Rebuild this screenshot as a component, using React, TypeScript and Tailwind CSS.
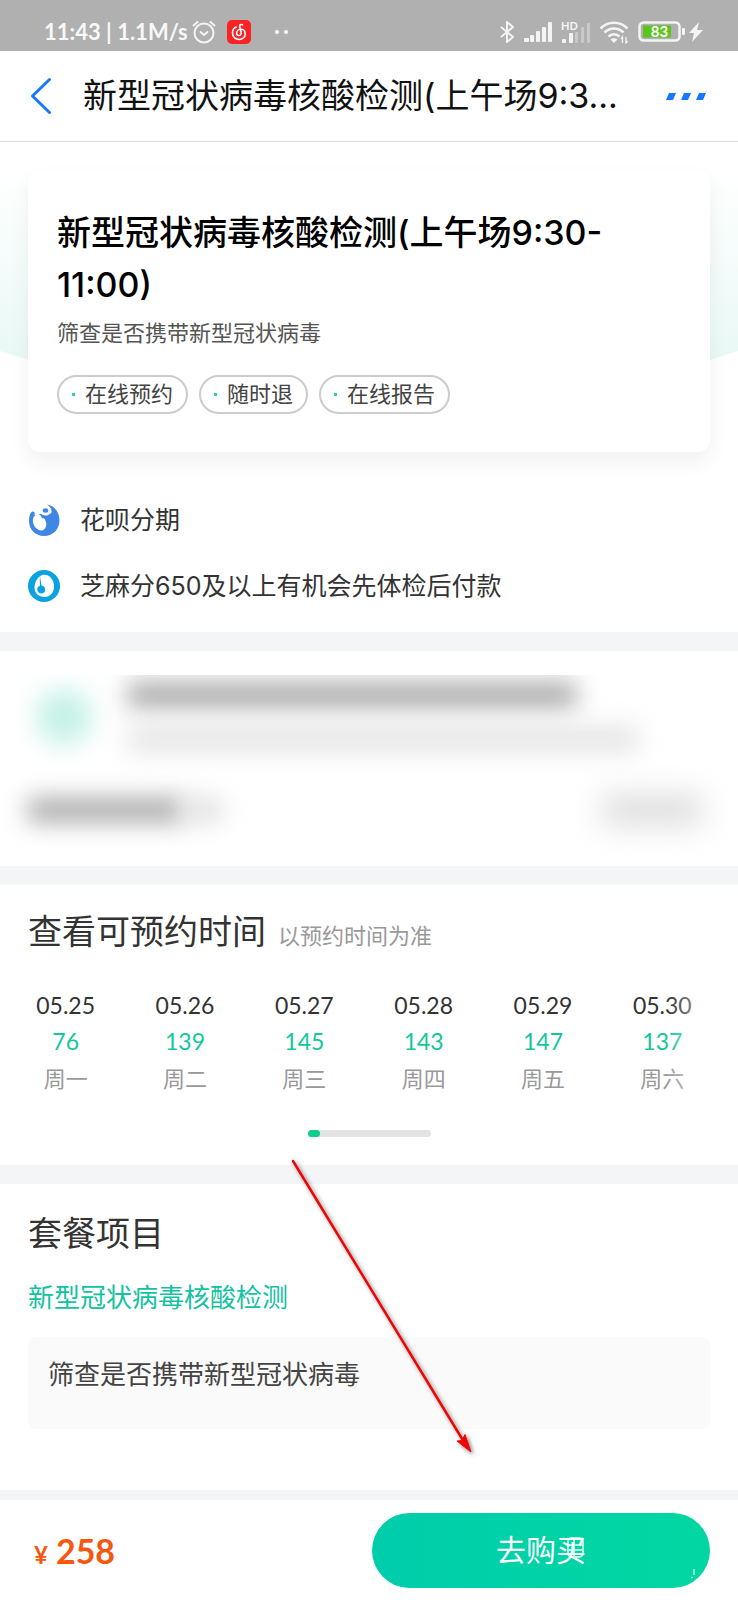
import { ReactNode } from 'react';

const tags = ['在线预约', '随时退', '在线报告'];

const days = [
  { date: '05.25', left: 76, week: '周一' },
  { date: '05.26', left: 139, week: '周二' },
  { date: '05.27', left: 145, week: '周三' },
  { date: '05.28', left: 143, week: '周四' },
  { date: '05.29', left: 147, week: '周五' },
  { date: '05.30', left: 137, week: '周六' },
];

function AlarmIcon() {
  return (
    <svg width="24" height="24" viewBox="0 0 24 24" fill="none" stroke="#f4f4f4" strokeWidth="2" strokeLinecap="round">
      <circle cx="12" cy="13" r="9.5" />
      <path d="M1.5 5.5 5.5 2M22.5 5.5 18.500 2" />
      <path d="m8.500 12 3.500 3 3.500-3" />
    </svg>
  );
}

function MusicIcon() {
  return (
    <svg width="24" height="24" viewBox="0 0 24 24" fill="none">
      <rect width="24" height="24" rx="5" fill="#fb2226" />
      <path
        d="M15.500 4.800c-1.700-.8-3.200 0-2.800 1.700l1.400 5.600c.5 2.200-.6 3.400-2.200 3.400-1.500 0-2.500-1.200-2.300-2.700.3-2.400 2.500-3.700 4.600-3.500 2.600.2 4 2.200 4 4.600 0 3.200-2.600 5.600-6 5.600-3.900 0-6.700-2.800-6.700-6.500 0-2.700 1.500-5 3.800-6"
        stroke="#fff"
        strokeWidth="1.600"
        strokeLinecap="round"
      />
    </svg>
  );
}

function BluetoothIcon() {
  return (
    <svg width="16" height="24" viewBox="0 0 16 24" fill="none" stroke="#f4f4f4" strokeWidth="2" strokeLinejoin="round">
      <path d="m2 7 12 10-6 5V2l6 5L2 17" />
    </svg>
  );
}

function SignalIcon() {
  return (
    <svg width="28" height="20" viewBox="0 0 28 20" fill="#f4f4f4">
      <rect y="16" width="5" height="4" rx="1" />
      <rect x="6" y="13" width="4" height="7" rx="1" />
      <rect x="12" y="9" width="4" height="11" rx="1" />
      <rect x="18" y="5" width="4" height="15" rx="1" />
      <rect x="24" y="0" width="4" height="20" rx="1" />
    </svg>
  );
}

function HdSignalIcon() {
  return (
    <svg className="overflow-visible" width="29" height="24" viewBox="0 0 29 24" fill="#f4f4f4">
      <text x="0" y="10" fontSize="11" fontWeight="700">HD</text>
      <rect x="1" y="19" width="4" height="4" rx="1" />
      <rect x="8" y="13" width="4" height="10" rx="1" />
      <g fill="#c9c9c9">
        <rect x="14" y="12" width="3" height="11" rx="1" />
        <rect x="20" y="7" width="3" height="16" rx="1" />
        <rect x="26" y="3" width="3" height="20" rx="1" />
      </g>
    </svg>
  );
}

function WifiIcon() {
  return (
    <svg width="30" height="24" viewBox="0 0 30 24" fill="none" stroke="#f4f4f4" strokeWidth="2.600">
      <path d="M1.500 8.500C9 .8 21 .8 28.500 8.500" />
      <path d="M5.500 12.500c5.500-5.300 13.500-5.300 19 0" />
      <path d="M9.500 16.500c3.200-3 7.800-3 11 0" />
      <path d="m11.500 19.500 3.500 3.500 3.500-3.500c-2-1.800-5-1.800-7 0Z" fill="#f4f4f4" stroke="none" />
      <path d="M23.500 23v-6l-1.500 2M27 17v6l1.500-2" strokeWidth="1.300" />
    </svg>
  );
}

function BatteryIcon() {
  return (
    <svg width="66" height="22" viewBox="0 0 66 22" fill="none">
      <rect x="1.500" y="1.500" width="40" height="18" rx="4" stroke="#f4f4f4" strokeWidth="2.500" />
      <rect x="5" y="4.500" width="28" height="12" fill="#5cc41a" />
      <rect x="44" y="7" width="3" height="7" rx="1" fill="#f4f4f4" />
      <text x="21.500" y="16" fontSize="15" fontWeight="700" textAnchor="middle" fill="#fff">83</text>
      <path d="M61 1 51 12h5l-2 9 11-12h-6l2-8Z" fill="#f4f4f4" />
    </svg>
  );
}

function HuabeiIcon() {
  return (
    <svg width="32" height="32" viewBox="0 0 32 32" fill="none">
      <path
        d="M19 .5c7.500 1 12.500 8 12.500 16C31.500 25 25 32 16.200 32S1 25.500 1 17c0-3.500.5-7 2.500-9 1.700-1 3.500 0 3.200 1.800-.2 1.500.8 2.200 2.300 2.200l4-3c2 3.500 7 3.500 9.500 1C25 7 23 3.500 19 .5Z"
        fill="#3f87e4"
      />
      <ellipse cx="11.500" cy="18.500" rx="6.200" ry="8.400" fill="#fff" transform="rotate(-28 11.500 18.500)" />
      <path d="M6.500 10.500C8 6.500 12 3 18.500 1.500c4 2 5.500 5.500 3 8-2.500 2.300-6.500 2-8.500 0-1.500.5-3 1.500-4 3Z" fill="#fff" />
      <ellipse cx="17.500" cy="6.500" rx="2.800" ry="2.200" fill="#3f87e4" />
      <path d="M11.500 9.500c2 2.800 8 3.500 11-.5v4l-8 1.500Z" fill="#3f87e4" />
    </svg>
  );
}

function ZhimaIcon() {
  return (
    <svg width="32" height="32" viewBox="0 0 32 32" fill="none">
      <circle cx="16" cy="16" r="16" fill="#0ba2e2" />
      <path d="M14.500 5C20 3.500 26 8.500 26 16.500 26 22.500 22 27 16.500 27S6.500 23 6.500 18 9 6.500 14.500 5Z" fill="#fff" />
      <path d="M12 6c.5 4 1.200 7 1.600 9.500 2.200.3 3.600 2 3.600 4 0 2.400-1.700 4-4 4s-4-1.700-4-4c0-1.700 1-3.200 2.800-3.700C12 12.500 11.500 9 12 6Z" fill="#0ba2e2" />
    </svg>
  );
}

function Feature({ icon, children }: { icon: ReactNode; children: ReactNode }) {
  return (
    <li className="flex items-center gap-5">
      {icon}
      <span className="text-[25px] leading-8">{children}</span>
    </li>
  );
}

function StatusBar() {
  return (
    <div className="flex h-[51px] items-end justify-between bg-[#b0b0b0] pr-[34px] pb-[7px] pl-11 font-[Lato,sans-serif] text-[#f8f8f8]">
      <div className="flex items-center">
        <span className="text-[22px] leading-6 font-bold">11:43 | 1.1M/s</span>
        <span className="ml-1 flex items-center gap-[11px]">
          <AlarmIcon />
          <MusicIcon />
        </span>
        <span className="ml-6 flex gap-[5px]">
          <i className="size-1 rounded-full bg-white" />
          <i className="size-1 rounded-full bg-white" />
        </span>
      </div>
      <div className="flex items-center gap-[9px]">
        <BluetoothIcon />
        <SignalIcon />
        <HdSignalIcon />
        <WifiIcon />
        <BatteryIcon />
      </div>
    </div>
  );
}

export default function App() {
  return (
    <div className="relative min-h-screen bg-white font-[Inter,'Noto_Sans_CJK_SC',sans-serif] text-[#333]">
      <StatusBar />

      <header className="flex h-[91px] items-center border-b border-[#dedede] pr-8 pl-7">
        <button type="button" aria-label="返回" className="flex w-[55px] items-center text-[#1677ff]">
          <svg width="28" height="38" viewBox="0 0 28 38" fill="none" stroke="currentColor" strokeWidth="3" strokeLinecap="round" strokeLinejoin="round">
            <path d="M21.500 2.500 4.500 19l17 16.500" />
          </svg>
        </button>
        <h1 className="flex-1 truncate text-[34px] leading-[52px] text-[#111]">新型冠状病毒核酸检测(上午场9:3...</h1>
        <button type="button" aria-label="更多" className="text-[#1677ff]">
          <svg width="40" height="7" viewBox="0 0 40 7" fill="currentColor">
            <path d="M3 0h7L7 7H0ZM18 0h7l-3 7h-7ZM33 0h7l-3 7h-7Z" />
          </svg>
        </button>
      </header>

      <section className="relative px-7 pt-7 pb-[30px]">
        <svg className="absolute inset-x-0 top-0 h-[280px] w-full" viewBox="0 0 738 280" preserveAspectRatio="none">
          <defs>
            <linearGradient id="hero" x1="0" y1="0" x2="0" y2="1">
              <stop offset="0.100" stopColor="#fff" />
              <stop offset="0.750" stopColor="#ebf9f6" />
            </linearGradient>
          </defs>
          <path d="M0 0h738v209Q369 332 0 209Z" fill="url(#hero)" />
        </svg>
        <div className="relative rounded-xl bg-white px-[29px] pt-[37px] pb-[38px] shadow-[0_10px_20px_rgba(0,0,0,0.06)]">
          <h2 className="text-[34px] leading-[52px] font-medium text-black">
            新型冠状病毒核酸检测(上午场9:30-
            <br />
            11:00)
          </h2>
          <p className="mt-1.5 text-[22px] leading-8 text-[#555]">筛查是否携带新型冠状病毒</p>
          <ul className="mt-[26px] flex gap-[11px]">
            {tags.map((tag) => (
              <li key={tag} className="flex h-[39px] items-center gap-2.5 rounded-full border-2 border-[#ccc] px-[13px] text-[22px] text-[#444]">
                <i className="size-[3px] bg-[#2fd0a8]" />
                {tag}
              </li>
            ))}
          </ul>
        </div>
        <ul className="relative mt-[52px] flex flex-col gap-[34px]">
          <Feature icon={<HuabeiIcon />}>花呗分期</Feature>
          <Feature icon={<ZhimaIcon />}>芝麻分650及以上有机会先体检后付款</Feature>
        </ul>
      </section>

      <section aria-hidden="true" className="border-t-[19px] border-[#f4f5f7] pt-6">
        <div className="flex h-[191px] flex-col justify-between overflow-hidden pr-9 pb-10 pl-7">
          <div className="flex items-center gap-9">
            <div className="mt-2 ml-2 h-14 w-14 rounded-full bg-[#c4f1e6] blur-[13px]" />
            <div className="flex flex-1 flex-col gap-5 pt-2">
              <div className="h-6 w-[448px] max-w-full bg-[#a4a4a4] blur-[12px]" />
              <div className="h-6 w-[510px] max-w-full bg-[#e2e2e2] blur-[13px]" />
            </div>
          </div>
          <div className="flex items-center justify-between">
            <div className="flex">
              <div className="h-6 w-[155px] bg-[#a8a8a8] blur-[12px]" />
              <div className="h-6 w-10 bg-[#e0e0e0] blur-[12px]" />
            </div>
            <div className="h-8 w-[100px] bg-[#dedede] blur-[15px]" />
          </div>
        </div>
      </section>

      <section className="border-t-[19px] border-[#f4f5f7] pt-[21px] pb-7">
        <div className="flex items-baseline gap-3 px-7">
          <h2 className="text-[34px] leading-[52px]">查看可预约时间</h2>
          <span className="text-[22px] text-[#999]">以预约时间为准</span>
        </div>
        <div className="relative mt-[29px] mr-4 ml-1.5">
          <ul className="grid grid-cols-6 text-center font-[Lato,'Noto_Sans_CJK_SC',sans-serif]">
            {days.map((day) => (
              <li key={day.date}>
                <p className="text-[23px] leading-9">{day.date}</p>
                <p className="text-[23px] leading-9 text-[#13c79b]">{day.left}</p>
                <p className="text-[22px] leading-10 text-[#999]">{day.week}</p>
              </li>
            ))}
          </ul>
          <div className="absolute inset-y-0 right-0 w-14 bg-linear-to-r from-white/0 to-white/80" />
        </div>
        <div className="mx-auto mt-[31px] h-[7px] w-[123px] rounded-full bg-[#e3e3e3]">
          <div className="h-full w-3 rounded-full bg-[#08d08c]" />
        </div>
      </section>

      <section className="border-t-[19px] border-[#f4f5f7] px-7 pt-6 pb-[61px]">
        <h2 className="text-[34px] leading-[52px]">套餐项目</h2>
        <h3 className="mt-5 text-[26px] leading-9 text-[#13c2a0]">新型冠状病毒核酸检测</h3>
        <div className="mt-[21px] rounded-lg bg-[#fafafa] px-5 pt-5 pb-9">
          <p className="text-[26px] leading-9 text-[#444]">筛查是否携带新型冠状病毒</p>
        </div>
      </section>

      <footer className="flex items-center justify-between border-t-[10px] border-[#f3f4f6] pt-[13px] pr-7 pb-[13px] pl-[34px]">
        <p className="flex items-baseline gap-2 font-[Lato,sans-serif] font-bold text-[#f5570e]">
          <span className="text-[24px]">¥</span>
          <span className="text-[34px] leading-[52px]">258</span>
        </p>
        <button type="button" className="relative h-[75px] w-1/2 rounded-full bg-linear-to-r from-[#00cdab] to-[#02d7a2] text-[30px] text-white">
          <span className="relative">
            去购买
            <svg className="absolute right-0 bottom-2 h-6 w-5" viewBox="0 0 20 24" fill="none" stroke="#fff" strokeWidth="2" opacity="0.700">
              <rect x="2" y="2" width="15" height="19" rx="4" />
              <path d="M2 9h15M2 14h16M8 3v18" />
            </svg>
          </span>
          <svg className="absolute right-3 bottom-2 h-3 w-2" viewBox="0 0 8 12" fill="none" stroke="#fff">
            <path d="M4 1v6M1 10l2-1" />
          </svg>
        </button>
      </footer>

      {/* pointer to the buy button */}
      <svg className="pointer-events-none absolute top-[1156px] left-[288px] drop-shadow-[2px_2px_2px_rgba(0,0,0,0.5)]" width="190" height="302" viewBox="0 0 190 302">
        <path d="m5 5 171 281" stroke="#f00505" strokeWidth="2.500" strokeLinecap="round" />
        <path d="M183 296l-14-11 5-.5 3-6Z" fill="#f00505" stroke="#f00505" />
      </svg>
    </div>
  );
}
